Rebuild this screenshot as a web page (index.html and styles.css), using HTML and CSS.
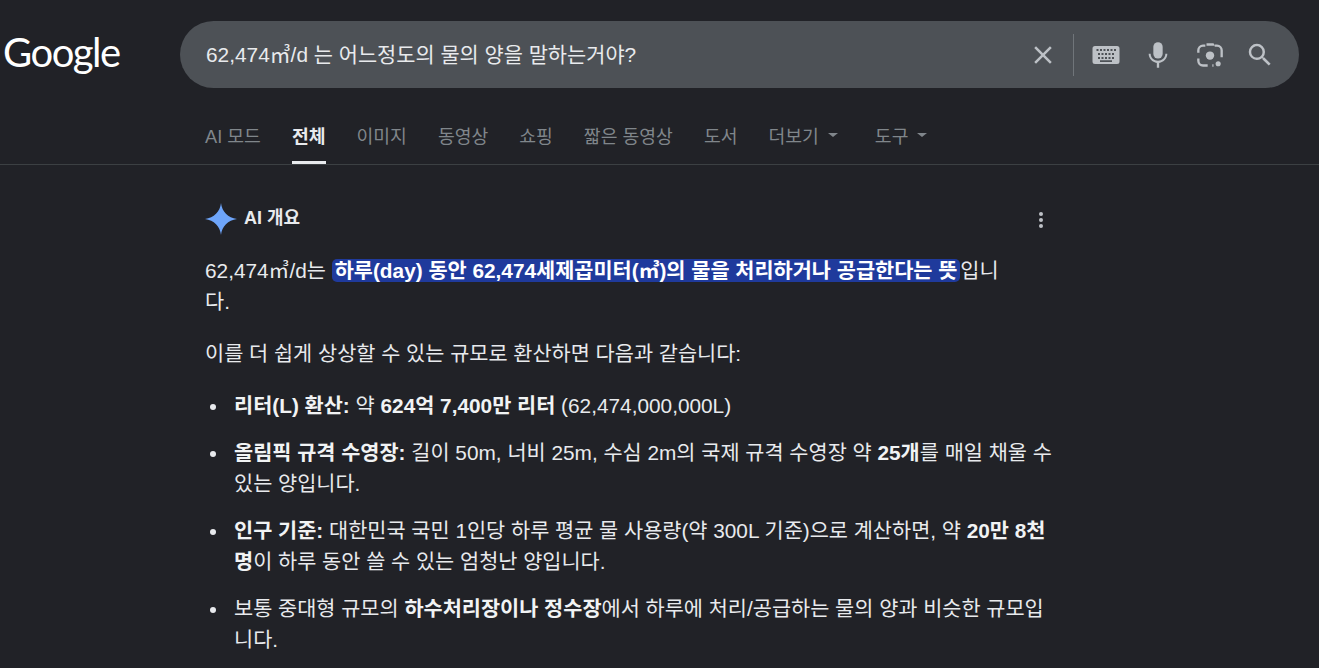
FILE: index.html
```html
<!DOCTYPE html>
<html lang="ko">
<head>
<meta charset="UTF-8">
<title>62,474㎥/d 는 어느정도의 물의 양을 말하는거야? - Google 검색</title>
<link rel="stylesheet" href="styles.css">
</head>
<body>
<header class="top-bar">
    <a class="logo">Google</a>
    <div class="search-box">
        <span class="search-text">62,474㎥/d 는 어느정도의 물의 양을 말하는거야?</span>
        <div class="search-icons">
            <svg class="icon icon-clear" viewBox="0 0 24 24"><path d="M19 6.410 17.590 5 12 10.590 6.410 5 5 6.410 10.590 12 5 17.590 6.410 19 12 13.410 17.590 19 19 17.590 13.410 12z"/></svg>
            <span class="divider"></span>
            <svg class="icon icon-keyboard" viewBox="0 0 28 20"><path fill-rule="evenodd" d="M3 1h22a2.500 2.500 0 0 1 2.500 2.500v13A2.500 2.500 0 0 1 25 19H3a2.500 2.500 0 0 1-2.500-2.500v-13A2.500 2.500 0 0 1 3 1zm1.500 3v2h2V4zm3.500 0v2h2V4zm3.500 0v2h2V4zm3.500 0v2h2V4zm3.500 0v2h2V4zm3.500 0v2h2V4zM6 8v2h2V8zm3.500 0v2h2V8zm3.500 0v2h2V8zm3.500 0v2h2V8zm3.500 0v2h2V8zM6 12v2h2v-2zm3.500 0v2h2v-2zm3.500 0v2h2v-2zm3.500 0v2h2v-2zm3.500 0v2h2v-2zM8 15.200v1.800h12v-1.800z"/></svg>
            <svg class="icon icon-mic" viewBox="0 0 24 24"><path d="M12 15a4 4 0 0 0 4-4V5a4 4 0 0 0-8 0v6a4 4 0 0 0 4 4z"/><path d="M18.300 11c0 3.500-2.800 6-6.300 6s-6.300-2.500-6.300-6H4c0 4 3.100 7.300 7 7.800V23h2v-4.200c3.900-.5 7-3.800 7-7.800z"/></svg>
            <svg class="icon icon-lens" viewBox="0 0 24 24"><circle cx="12" cy="12.500" r="3.600"/><circle cx="19" cy="19.500" r="2.200"/><path d="M9 2h6l1.200 2H9z"/><path class="lens-frame" d="M8 4H6a4 4 0 0 0-4 4v2M16 4h2a4 4 0 0 1 4 4v6M2 15v2a4 4 0 0 0 4 4h4M14 21h1"/></svg>
            <svg class="icon icon-search" viewBox="0 0 24 24"><path d="M15.500 14h-.79l-.28-.27A6.470 6.470 0 0 0 16 9.500 6.500 6.500 0 1 0 9.500 16c1.610 0 3.090-.59 4.230-1.570l.27.28v.79l5 4.990L20.490 19l-4.990-5zm-6 0C7.010 14 5 11.990 5 9.500S7.010 5 9.500 5 14 7.010 14 9.500 11.990 14 9.500 14z"/></svg>
        </div>
    </div>
</header>

<nav class="tabs">
    <a class="tab">AI 모드</a>
    <a class="tab active">전체</a>
    <a class="tab">이미지</a>
    <a class="tab">동영상</a>
    <a class="tab">쇼핑</a>
    <a class="tab">짧은 동영상</a>
    <a class="tab">도서</a>
    <a class="tab">더보기<i class="caret"></i></a>
    <a class="tab">도구<i class="caret"></i></a>
</nav>

<main class="overview">
    <div class="overview-head">
        <svg class="spark" viewBox="0 0 32 32"><path d="M16 0c.9 8.500 7 15 16 16-9 1-15.100 7.500-16 16-.9-8.500-7-15-16-16 9-1 15.100-7.500 16-16z"/></svg>
        <span class="overview-title">AI 개요</span>
        <span class="more-dots"><i></i><i></i><i></i></span>
    </div>
    <p class="lead">62,474㎥/d는 <mark>하루(day) 동안 62,474세제곱미터(㎥)의 물을 처리하거나 공급한다는 뜻</mark>입니다.</p>
    <p>이를 더 쉽게 상상할 수 있는 규모로 환산하면 다음과 같습니다:</p>
    <ul>
        <li><b>리터(L) 환산:</b> 약 <b>624억 7,400만 리터</b> (62,474,000,000L)</li>
        <li><b>올림픽 규격 수영장:</b> 길이 50m, 너비 25m, 수심 2m의 국제 규격 수영장 약 <b>25개</b>를 매일 채울 수 있는 양입니다.</li>
        <li><b>인구 기준:</b> 대한민국 국민 1인당 하루 평균 물 사용량(약 300L 기준)으로 계산하면, 약 <b>20만 8천명</b>이 하루 동안 쓸 수 있는 엄청난 양입니다.</li>
        <li>보통 중대형 규모의 <b>하수처리장이나 정수장</b>에서 하루에 처리/공급하는 물의 양과 비슷한 규모입니다.</li>
    </ul>
</main>
</body>
</html>
```

FILE: styles.css
```css
body {
    margin: 0;
    height: 668px;
    overflow: hidden;
    background-color: #212227;
    color: #e8eaed;
    font-family: "Liberation Sans", "Noto Sans CJK KR", sans-serif;
}

.top-bar {
    display: flex;
    align-items: center;
    padding: 21px 20px 0 3px;
}

.logo {
    width: 177px;
    margin-top: -6px;
    color: #fff;
    font-family: Lato, sans-serif;
    font-size: 40px;
    letter-spacing: -1.5px;
}

.search-box {
    flex: 1;
    height: 67px;
    display: flex;
    align-items: center;
    justify-content: space-between;
    padding: 0 24px 0 26px;
    border-radius: 34px;
    background-color: #4d5156;
}

.search-text {
    margin-top: -3px;
    font-size: 20.85px;
    color: #e8eaed;
}

.search-icons {
    display: flex;
    align-items: center;
}

.icon {
    display: block;
    fill: #bdc1c6;
}

.icon-clear {
    width: 30px;
    height: 30px;
}

.divider {
    width: 1px;
    height: 42px;
    margin: 0 18px 0 15px;
    background-color: #70757a;
}

.icon-keyboard {
    width: 28px;
    height: 20px;
}

.icon-mic {
    width: 28px;
    height: 28px;
    margin-left: 24px;
}

.icon-lens {
    width: 28px;
    height: 28px;
    margin-left: 24px;
}

.lens-frame {
    fill: none;
    stroke: #bdc1c6;
    stroke-width: 2;
}

.icon-search {
    width: 30px;
    height: 30px;
    margin-left: 21px;
}

.tabs {
    display: flex;
    gap: 31px;
    height: 76px;
    padding-left: 205px;
    border-bottom: 1px solid #3c4043;
}

.tab {
    display: flex;
    align-items: center;
    height: 53px;
    padding-top: 20px;
    font-size: 18.25px;
    color: #80868b;
    border-bottom: 3px solid transparent;
}

.tab.active {
    font-weight: bold;
    color: #e8eaed;
    border-bottom-color: #e8eaed;
}

.caret {
    margin: 0 6px 0 9px;
    border-top: 4px solid #80868b;
    border-left: 5px solid transparent;
    border-right: 5px solid transparent;
}

.overview {
    width: 848px;
    margin-left: 205px;
    font-size: 20.8px;
    line-height: 31px;
}

.overview-head {
    display: flex;
    align-items: center;
    height: 32px;
    margin-top: 38px;
    margin-bottom: 20px;
}

.spark {
    width: 32px;
    height: 32px;
    fill: #6ea5fa;
}

.overview-title {
    margin-left: 7px;
    margin-top: -2px;
    font-size: 18px;
    font-weight: bold;
}

.more-dots {
    display: flex;
    flex-direction: column;
    gap: 2px;
    margin: 2px 10px 0 auto;
}

.more-dots i {
    width: 4px;
    height: 4px;
    border-radius: 50%;
    background-color: #bdc1c6;
}

p {
    margin: 0 0 21px;
}

.lead {
    width: 800px;
}

mark {
    padding: 0 3px;
    border-radius: 5px;
    color: #fff;
    font-weight: bold;
    background-color: #1f3a9c;
}

ul {
    margin: 0;
    padding: 0 0 0 29px;
    list-style: none;
}

li {
    position: relative;
    margin-bottom: 16px;
}

li::before {
    content: "";
    position: absolute;
    top: 14px;
    left: -24px;
    width: 6px;
    height: 6px;
    border-radius: 50%;
    background-color: #e8eaed;
}

li b {
    color: #f1f3f4;
}
```
